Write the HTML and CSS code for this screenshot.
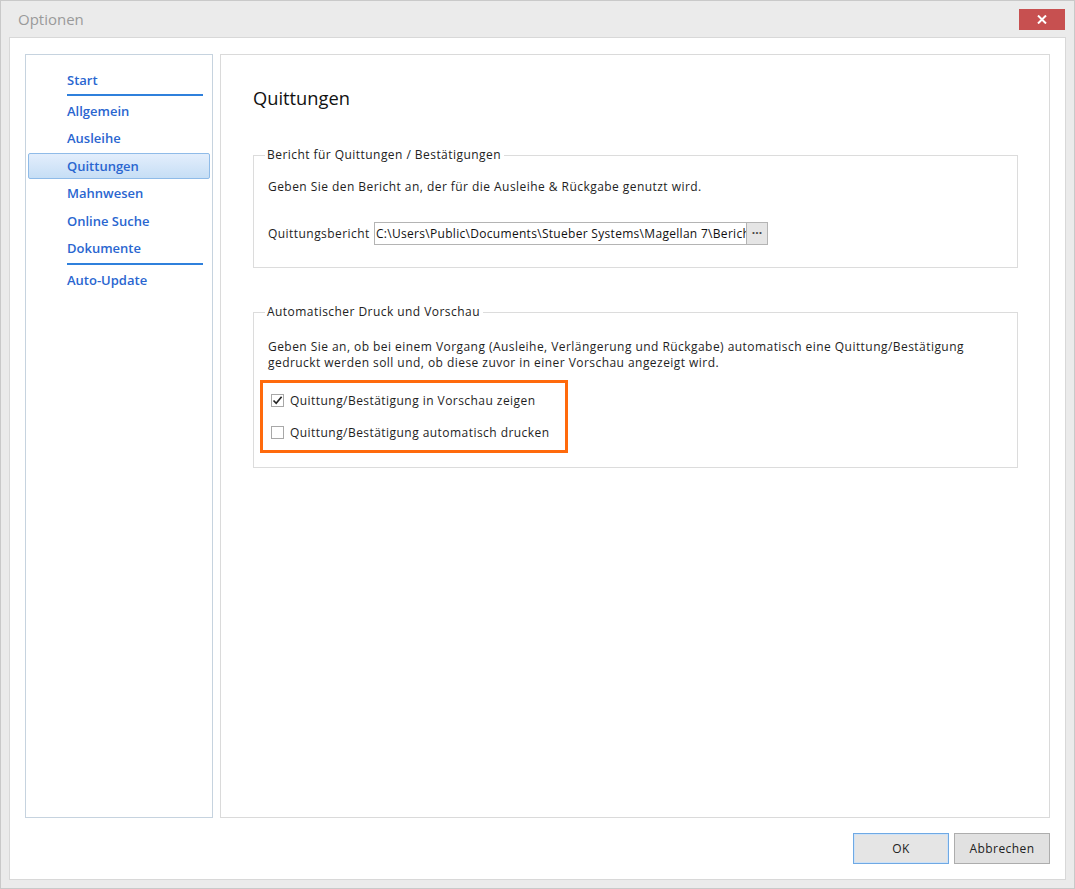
FILE: index.html
```html
<!DOCTYPE html>
<html lang="de">
<head>
<meta charset="utf-8">
<title>Optionen</title>
<link rel="stylesheet" href="styles.css">
</head>
<body>
<div class="window">
  <div class="titlebar">
    <span class="title">Optionen</span>
    <div class="close">
      <svg width="10" height="9" viewBox="0 0 10 9"><path d="M1 0.5 L9 8.5 M9 0.5 L1 8.5" stroke="#fff" stroke-width="2"/></svg>
    </div>
  </div>
  <div class="client">
    <div class="main">
      <nav class="sidebar">
        <div class="nav-item">Start</div>
        <div class="nav-sep"></div>
        <div class="nav-item">Allgemein</div>
        <div class="nav-item">Ausleihe</div>
        <div class="nav-item selected">Quittungen</div>
        <div class="nav-item">Mahnwesen</div>
        <div class="nav-item">Online Suche</div>
        <div class="nav-item">Dokumente</div>
        <div class="nav-sep sep2"></div>
        <div class="nav-item">Auto-Update</div>
      </nav>
      <section class="panel">
        <h1 class="heading">Quittungen</h1>
        <fieldset class="group group1">
          <legend>Bericht für Quittungen / Bestätigungen</legend>
          <p class="desc desc1">Geben Sie den Bericht an, der für die Ausleihe &amp; Rückgabe genutzt wird.</p>
          <div class="row">
            <label class="row-label">Quittungsbericht</label>
            <div class="pathbox">
              <span class="pathtext">C:\Users\Public\Documents\Stueber Systems\Magellan 7\Berichte</span>
              <span class="browse">···</span>
            </div>
          </div>
        </fieldset>
        <fieldset class="group group2">
          <legend>Automatischer Druck und Vorschau</legend>
          <p class="desc desc2">Geben Sie an, ob bei einem Vorgang (Ausleihe, Verlängerung und Rückgabe) automatisch eine Quittung/Bestätigung<br>gedruckt werden soll und, ob diese zuvor in einer Vorschau angezeigt wird.</p>
          <div class="highlight">
            <div class="check-row">
              <span class="checkbox"><svg width="11" height="11" viewBox="0 0 11 11"><path d="M1.5 5.5 L4.2 8.3 L9.6 1.8" fill="none" stroke="#262626" stroke-width="1.7"/></svg></span>
              <span class="check-label">Quittung/Bestätigung in Vorschau zeigen</span>
            </div>
            <div class="check-row">
              <span class="checkbox"></span>
              <span class="check-label">Quittung/Bestätigung automatisch drucken</span>
            </div>
          </div>
        </fieldset>
      </section>
    </div>
    <div class="footer">
      <button class="btn btn-default">OK</button>
      <button class="btn">Abbrechen</button>
    </div>
  </div>
</div>
</body>
</html>
```
FILE: styles.css
```css
* { box-sizing: border-box; }
html, body {
  margin: 0;
  padding: 0;
  width: 1075px;
  height: 889px;
  overflow: hidden;
  background: #ffffff;
}
body {
  font-family: "Open Sans", "Noto Sans", sans-serif;
  font-size: 12px;
  letter-spacing: 0.45px;
  color: #1e1e1e;
}
.window {
  width: 1075px;
  height: 889px;
  background: #ebebeb;
  border: 1px solid #c9c9c9;
  display: flex;
  flex-direction: column;
}
.titlebar {
  height: 36px;
  display: flex;
  align-items: flex-start;
  justify-content: space-between;
  padding-left: 17px;
  padding-right: 9px;
}
.title {
  font-family: "Open Sans", "Noto Sans", sans-serif;
  font-size: 15px;
  letter-spacing: 0;
  color: #9a9a9a;
  line-height: 20px;
  margin-top: 8px;
}
.close {
  width: 46px;
  height: 21px;
  margin-top: 8px;
  background: #c75050;
  display: flex;
  align-items: center;
  justify-content: center;
}
.client {
  flex: 1;
  margin: 0 8px 8px 8px;
  background: #ffffff;
  border: 1px solid #d8d8d8;
  padding: 16px 15px 15px 15px;
  display: flex;
  flex-direction: column;
}
.main {
  height: 764px;
  display: flex;
  gap: 7px;
}
.sidebar {
  width: 188px;
  border: 1px solid #c6d3df;
  padding-top: 11px;
  font-family: "Open Sans", "Noto Sans", sans-serif;
  font-size: 13px;
  font-weight: 600;
  letter-spacing: 0;
  color: #2a66d0;
}
.nav-item {
  height: 27.5px;
  margin: 0 2px;
  border: 1px solid transparent;
  border-radius: 2px;
  padding-left: 38px;
  display: flex;
  align-items: center;
}
.nav-item.selected {
  background: linear-gradient(#e3eefc, #c6def5);
  border-color: #8fbbe8;
  height: 26px;
  margin-top: 0.75px;
  margin-bottom: 0.75px;
}
.nav-sep {
  height: 2px;
  background: #2f80dc;
  margin: 0 9px 1.5px 41px;
}
.sep2 {
  margin-top: 0.5px;
}
.panel {
  flex: 1;
  border: 1px solid #dadada;
  padding: 29px 31px 0 32px;
}
.heading {
  margin: 0 0 35px 0;
  font-family: "Open Sans", "Noto Sans", sans-serif;
  font-weight: 400;
  font-size: 18.3px;
  letter-spacing: 0;
  line-height: 28px;
  color: #111;
}
.group {
  margin: 0;
  border: 1px solid #dcdcdc;
  padding: 0 14px 22px 14px;
  min-width: 0;
}
.group legend {
  padding: 0 3px 0 2px;
  margin-left: -3px;
  line-height: 16px;
  color: #222;
}
.group2 {
  margin-top: 36px;
  padding-bottom: 14px;
}
.desc {
  margin: 0;
  line-height: 16px;
  color: #1e1e1e;
}
.desc1 { margin-top: 16px; }
.desc2 { margin-top: 19px; }
.row {
  margin-top: 27px;
  display: flex;
  align-items: center;
  height: 23px;
}
.row-label {
  width: 106px;
  flex: none;
}
.pathbox {
  width: 394px;
  height: 23px;
  border: 1px solid #b4b4b4;
  display: flex;
  background: #fff;
}
.pathtext {
  flex: 1;
  overflow: hidden;
  white-space: nowrap;
  padding-left: 1px;
  line-height: 21px;
  letter-spacing: 0.3px;
  color: #111;
}
.browse {
  width: 21px;
  flex: none;
  background: #e5e5e5;
  border-left: 1px solid #b4b4b4;
  text-align: center;
  line-height: 19px;
  font-size: 12px;
  font-weight: bold;
  letter-spacing: 0;
  color: #444;
}
.highlight {
  margin-top: 9px;
  margin-left: -8px;
  width: 308px;
  border: 3px solid #ff6a0c;
  padding: 1.5px 8px 1.5px 8px;
}
.check-row {
  height: 32px;
  display: flex;
  align-items: center;
  gap: 6px;
}
.checkbox {
  width: 13px;
  height: 13px;
  border: 1px solid #a8a8a8;
  background: #fff;
  display: flex;
  align-items: center;
  justify-content: center;
  flex: none;
}
.check-label {
  color: #1e1e1e;
}
.footer {
  margin-top: 15px;
  display: flex;
  justify-content: flex-end;
  gap: 5px;
}
.btn {
  width: 96px;
  height: 31px;
  margin: 0;
  border: 1px solid #adadad;
  background: #e1e1e1;
  font-family: "Open Sans", "Noto Sans", sans-serif;
  font-size: 12px;
  letter-spacing: 0.45px;
  color: #222;
  padding: 0;
}
.btn-default {
  border-color: #6fa9e4;
  background: #e5e5e5;
  box-shadow: inset 0 0 0 1px #cfe2f6;
}
```
